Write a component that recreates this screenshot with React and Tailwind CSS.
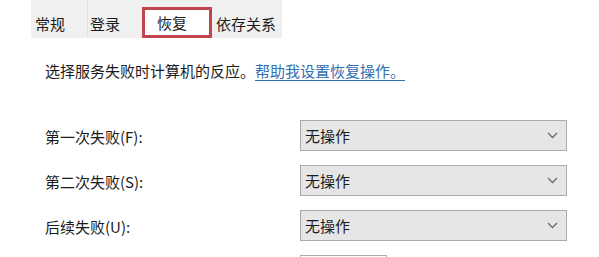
import React from 'react'

const font = { fontFamily: '"Noto Sans CJK SC", "Noto Sans", sans-serif' }

function Chevron() {
  return (
    <svg width="11" height="7" viewBox="0 0 11 7" className="shrink-0">
      <polyline points="1,1 5.5,5.5 10,1" fill="none" stroke="#6b6b6b" strokeWidth="1.3" />
    </svg>
  )
}

function Select({ value }) {
  return (
    <div className="flex items-center w-[267px] h-[31px] bg-[#e6e6e6] border border-[#ababab] pl-[4px] pr-[8px]">
      <span className="flex-1 text-[15px] text-[#1b1b1b] leading-none">{value}</span>
      <Chevron />
    </div>
  )
}

const rows = ['第一次失败(F):', '第二次失败(S):', '后续失败(U):']

export default function App() {
  return (
    <div className="w-[599px] h-[257px] bg-white overflow-hidden text-[#1b1b1b]" style={font}>
      <div className="ml-[31px] w-[251px] h-[38px] bg-[#f0f0f0] flex text-[15px] leading-none">
        <div className="w-[57px] pl-[4px] pt-[8px] flex items-center border-r border-[#e2e2e2]">常规</div>
        <div className="w-[54px] pl-[2px] pt-[8px] flex items-center">登录</div>
        <div className="w-[70px] mt-[7px] bg-white border-[3px] border-[#c2454b] flex items-center pl-[12px]">恢复</div>
        <div className="flex-1 pl-[4px] pt-[8px] flex items-center">依存关系</div>
      </div>

      <div className="ml-[45px] mt-[22px] h-[20px] flex items-center text-[15px] leading-none">
        <span>选择服务失败时计算机的反应。</span>
        <span className="text-[#2f6fb3] underline underline-offset-[3px]">帮助我设置恢复操作。</span>
      </div>

      <div className="mt-[40px] flex flex-col gap-[14px]">
        {rows.map(label => (
          <div key={label} className="flex items-center">
            <div className="ml-[45px] w-[255px] text-[15px] leading-none pt-[2px]">{label}</div>
            <Select value="无操作" />
          </div>
        ))}
        <div className="ml-[300px] w-[87px] h-[31px] border border-[#ababab] bg-white" />
      </div>
    </div>
  )
}
